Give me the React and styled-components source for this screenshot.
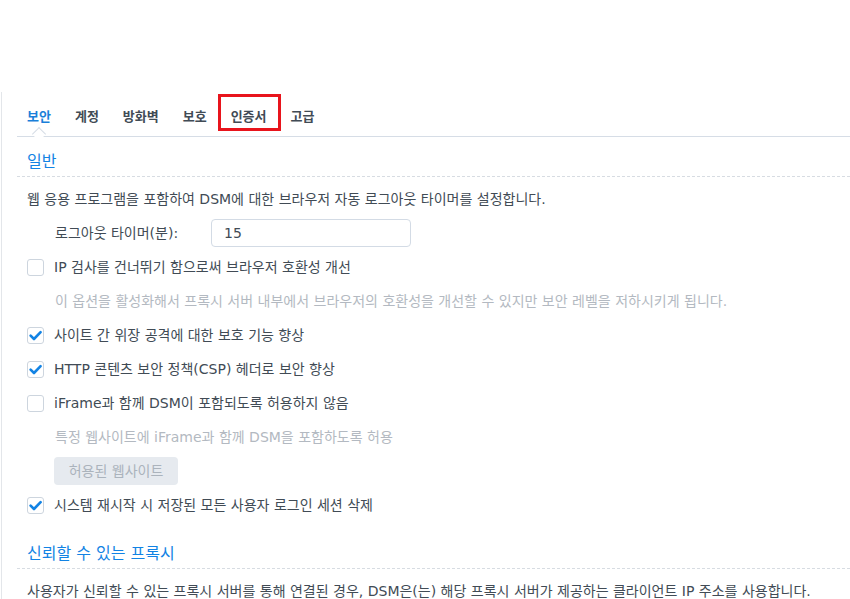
import React from "react";
import styled, { createGlobalStyle } from "styled-components";

const GlobalStyle = createGlobalStyle`
  html, body {
    margin: 0;
    padding: 0;
    background: #ffffff;
  }
  body {
    font-family: "DejaVu Sans", "Noto Sans CJK KR", sans-serif;
    color: #414b55;
    overflow: hidden;
  }
`;

const tabs = ["보안", "계정", "방화벽", "보호", "인증서", "고급"];

const CheckIcon = () => (
  <svg width="15" height="15" viewBox="0 0 15 15">
    <path
      d="M2.6 7.6 L6 11 L12.6 4.2"
      fill="none"
      stroke="#1283e4"
      strokeWidth="2.6"
      strokeLinecap="round"
      strokeLinejoin="round"
    />
  </svg>
);

const CheckRow = ({ checked, children }) => (
  <Row>
    <Box>{checked && <CheckIcon />}</Box>
    <RowLabel>{children}</RowLabel>
  </Row>
);

const App = () => {
  return (
    <>
      <GlobalStyle />
      <Page>
        <Panel>
          <TabBar>
            {tabs.map((t, i) => (
              <Tab key={t} $active={i === 0} $marked={t === "인증서"}>
                {t}
              </Tab>
            ))}
          </TabBar>

          <Section $first>
            <Title>일반</Title>
            <Rows>
              <Row>
                <Text>
                  웹 응용 프로그램을 포함하여 DSM에 대한 브라우저 자동 로그아웃
                  타이머를 설정합니다.
                </Text>
              </Row>
              <Row $inset>
                <FieldLabel>로그아웃 타이머(분):</FieldLabel>
                <Input>15</Input>
              </Row>
              <CheckRow>IP 검사를 건너뛰기 함으로써 브라우저 호환성 개선</CheckRow>
              <Row $inset>
                <Hint>
                  이 옵션을 활성화해서 프록시 서버 내부에서 브라우저의 호환성을
                  개선할 수 있지만 보안 레벨을 저하시키게 됩니다.
                </Hint>
              </Row>
              <CheckRow checked>사이트 간 위장 공격에 대한 보호 기능 향상</CheckRow>
              <CheckRow checked>
                HTTP 콘텐츠 보안 정책(CSP) 헤더로 보안 향상
              </CheckRow>
              <CheckRow>iFrame과 함께 DSM이 포함되도록 허용하지 않음</CheckRow>
              <Row $inset>
                <Hint>특정 웹사이트에 iFrame과 함께 DSM을 포함하도록 허용</Hint>
              </Row>
              <Row $inset>
                <Button>허용된 웹사이트</Button>
              </Row>
              <CheckRow checked>
                시스템 재시작 시 저장된 모든 사용자 로그인 세션 삭제
              </CheckRow>
            </Rows>
          </Section>

          <Section>
            <Title>신뢰할 수 있는 프록시</Title>
            <Rows>
              <Row>
                <Text>
                  사용자가 신뢰할 수 있는 프록시 서버를 통해 연결된 경우,
                  DSM은(는) 해당 프록시 서버가 제공하는 클라이언트 IP 주소를
                  사용합니다.
                </Text>
              </Row>
            </Rows>
          </Section>
        </Panel>
      </Page>
    </>
  );
};

export default App;

const Page = styled.div`
  padding-top: 92px;
  height: 599px;
  box-sizing: border-box;
  overflow: hidden;
`;

const Panel = styled.div`
  margin-left: 1px;
  border-left: 1px solid #e3e6ea;
  padding-left: 15px;
  height: 600px;
`;

const TabBar = styled.div`
  display: flex;
  align-items: flex-start;
  gap: 3px;
  height: 45px;
  padding-top: 5px;
  border-bottom: 1px solid #d6dde6;
  box-sizing: border-box;
`;

const Tab = styled.div`
  position: relative;
  height: 31px;
  box-sizing: border-box;
  padding: 5px 11px 0 10px;
  display: flex;
  align-items: center;
  font-size: 13px;
  font-weight: 700;
  color: ${(p) => (p.$active ? "#1a7fd9" : "#414b55")};
  outline: ${(p) => (p.$marked ? "3px solid #e8141c" : "none")};
  white-space: nowrap;

  ${(p) =>
    p.$active &&
    `
    &::after {
      content: "";
      position: absolute;
      left: 50%;
      bottom: -11px;
      width: 9px;
      height: 9px;
      margin-left: -5px;
      background: #ffffff;
      border-left: 1px solid #d6dde6;
      border-top: 1px solid #d6dde6;
      transform: rotate(45deg);
    }
  `}
`;

const Section = styled.div`
  padding-top: ${(p) => (p.$first ? "15px" : "22px")};
`;

const Title = styled.div`
  padding: 0 10px 5px;
  font-size: 16px;
  line-height: 20px;
  color: #1283e4;
  background-image: repeating-linear-gradient(
    to right,
    #d7dce2 0 3px,
    transparent 3px 5px
  );
  background-size: 100% 1px;
  background-position: bottom left;
  background-repeat: no-repeat;
`;

const Rows = styled.div`
  display: flex;
  flex-direction: column;
  padding-top: 5px;
`;

const Row = styled.div`
  display: flex;
  align-items: center;
  height: 34px;
  padding-left: ${(p) => (p.$inset ? "38px" : "10px")};
  font-size: 14px;
  line-height: 16px;
  white-space: nowrap;
`;

const Text = styled.span`
  color: #414b55;
`;

const FieldLabel = styled.span`
  width: 156px;
  color: #414b55;
`;

const Input = styled.div`
  width: 200px;
  height: 28px;
  box-sizing: border-box;
  border: 1px solid #d3dbe5;
  border-radius: 4px;
  padding-left: 12px;
  display: flex;
  align-items: center;
  color: #414b55;
`;

const Hint = styled.span`
  color: #b3b9c1;
`;

const Box = styled.div`
  width: 17px;
  height: 17px;
  box-sizing: border-box;
  border: 1px solid #cdd5de;
  border-radius: 3px;
  display: flex;
  align-items: center;
  justify-content: center;
  flex-shrink: 0;
`;

const RowLabel = styled.span`
  margin-left: 10px;
  color: #414b55;
`;

const Button = styled.div`
  width: 124px;
  height: 28px;
  margin-left: -1px;
  border-radius: 4px;
  background: #e6eaef;
  color: #abb3bc;
  display: flex;
  align-items: center;
  justify-content: center;
`;
